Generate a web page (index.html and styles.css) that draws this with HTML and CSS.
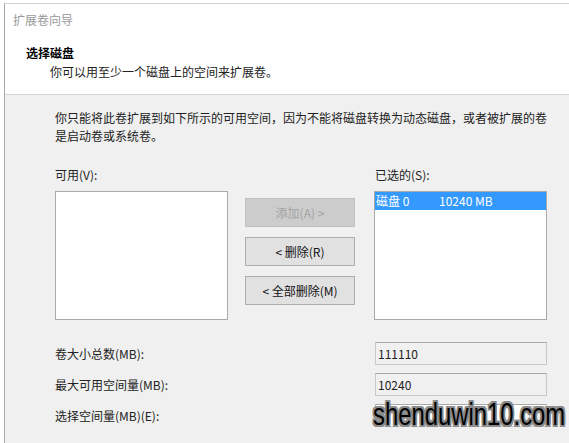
FILE: index.html
```html
<!DOCTYPE html>
<html lang="zh-CN">
<head>
<meta charset="utf-8">
<title>扩展卷向导</title>
<link rel="stylesheet" href="styles.css">
</head>
<body>
<div class="window">
  <div class="header">
    <div class="title">扩展卷向导</div>
    <div class="heading">选择磁盘</div>
    <div class="subheading">你可以用至少一个磁盘上的空间来扩展卷。</div>
  </div>
  <div class="content">
    <p class="intro">你只能将此卷扩展到如下所示的可用空间，因为不能将磁盘转换为动态磁盘，或者被扩展的卷是启动卷或系统卷。</p>
    <div class="pickers">
      <div class="col">
        <div class="label">可用(V):</div>
        <div class="listbox"></div>
      </div>
      <div class="buttons">
        <button class="btn disabled">添加(A) &gt;</button>
        <button class="btn">&lt; 删除(R)</button>
        <button class="btn">&lt; 全部删除(M)</button>
      </div>
      <div class="col col-right">
        <div class="label">已选的(S):</div>
        <div class="listbox">
          <div class="item selected"><span class="disk">磁盘 0</span><span class="size">10240 MB</span></div>
        </div>
      </div>
    </div>
    <div class="rows">
      <div class="row">
        <span class="row-label">卷大小总数(MB):</span>
        <div class="field readonly">111110</div>
      </div>
      <div class="row">
        <span class="row-label">最大可用空间量(MB):</span>
        <div class="field readonly">10240</div>
      </div>
      <div class="row">
        <span class="row-label">选择空间量(MB)(E):</span>
        <div class="field editable"><span class="spin"></span></div>
      </div>
    </div>
  </div>
</div>
<div class="watermark">shenduwin10.com</div>
</body>
</html>
```

FILE: styles.css
```css
html, body {
  margin: 0;
  padding: 0;
  background: #ffffff;
  width: 569px;
  height: 443px;
  overflow: hidden;
  font-family: "Noto Sans CJK SC", "Microsoft YaHei", sans-serif;
  font-size: 12px;
  color: #1a1a1a;
}

.window {
  margin-top: 3px;
  margin-left: 4px;
  height: 440px;
  border-top: 1px solid #c9d3d2;
  border-left: 1px solid #a8a8a8;
  background: #f0f0f0;
  display: flex;
  flex-direction: column;
}

.header {
  height: 91px;
  background: #ffffff;
  border-bottom: 1px solid #d6d6d6;
  padding: 8px 0 0 8px;
  box-sizing: border-box;
  line-height: 16px;
}

.title {
  color: #9a9a9a;
}

.heading {
  margin-top: 17px;
  margin-left: 13px;
  font-weight: bold;
  color: #000;
}

.subheading {
  margin-top: 3px;
  margin-left: 37px;
  color: #222;
}

.content {
  padding: 14px 0 0 50px;
}

.intro {
  margin: 0;
  width: 494px;
  line-height: 18px;
  color: #222;
}

.pickers {
  display: flex;
  margin-top: 22px;
}

.col {
  display: flex;
  flex-direction: column;
}

.col-right {
  margin-left: 19px;
}

.label {
  line-height: 16px;
  height: 16px;
  margin-bottom: 8px;
  color: #222;
}

.col-right .label {
  margin-left: 1px;
}

.listbox {
  width: 171px;
  height: 127px;
  background: #ffffff;
  border: 1px solid #a9a9a9;
}

.item {
  height: 18px;
  line-height: 18px;
  display: flex;
  padding-left: 1px;
}

.selected {
  background: #3399ff;
  color: #ffffff;
}

.disk {
  width: 63px;
}

.buttons {
  display: flex;
  flex-direction: column;
  margin-left: 17px;
  padding-top: 31px;
  gap: 10px;
}

.btn {
  width: 110px;
  height: 29px;
  margin: 0;
  padding: 0;
  font-family: inherit;
  font-size: 12px;
  color: #111;
  background: #e1e1e1;
  border: 1px solid #adadad;
  border-radius: 0;
}

.btn.disabled {
  color: #a3a3a3;
  background: #cccccc;
  border-color: #bfbfbf;
}

.rows {
  display: flex;
  flex-direction: column;
  gap: 8px;
  margin-top: 22px;
}

.row {
  display: flex;
  align-items: center;
  height: 23px;
}

.row-label {
  width: 320px;
  color: #222;
}

.field {
  box-sizing: border-box;
  width: 172px;
  height: 23px;
  line-height: 21px;
  padding-left: 2px;
  border: 1px solid #c8c8c8;
  border-top-color: #a8a8a8;
  color: #222;
  display: flex;
}

.readonly {
  background: #f0f0f0;
}

.editable {
  background: #ffffff;
  justify-content: flex-end;
}

.spin {
  width: 16px;
  height: 19px;
  margin: 1px;
  box-sizing: border-box;
  border: 1px solid #c8c8c8;
  background: #f4f4f4;
}

.watermark {
  position: absolute;
  left: 373px;
  top: 395px;
  font-family: "Liberation Sans", Arial, sans-serif;
  font-size: 32px;
  line-height: 38px;
  color: #000000;
  transform: scaleX(0.745);
  transform-origin: left top;
  text-shadow:
    2px 0 0 #8a8a8a, -2px 0 0 #8a8a8a, 0 2px 0 #8a8a8a, 0 -2px 0 #8a8a8a,
    2px 2px 0 #8a8a8a, -2px -2px 0 #8a8a8a, 2px -2px 0 #8a8a8a, -2px 2px 0 #8a8a8a;
}
```
